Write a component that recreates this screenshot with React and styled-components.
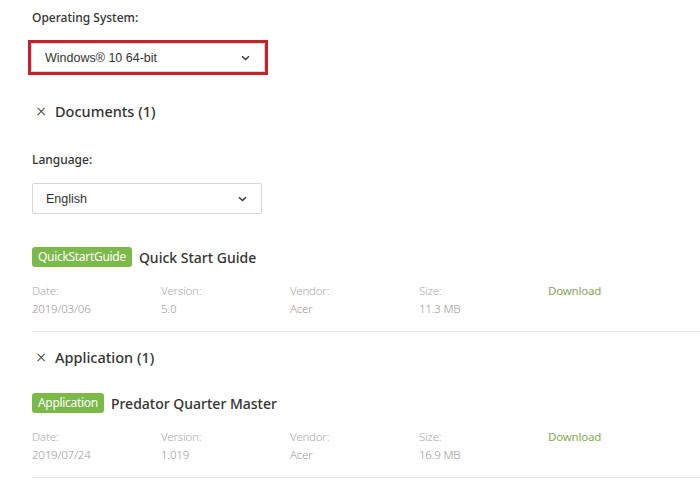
import React from "react";
import styled, { createGlobalStyle } from "styled-components";

const GlobalStyle = createGlobalStyle`
  body {
    margin: 0;
    background: #fff;
    font-family: "Noto Sans", "Open Sans", sans-serif;
    color: #333;
  }
`;

const secciones = [
  {
    nombre: "Documents",
    items: [
      {
        tipo: "QuickStartGuide",
        titulo: "Quick Start Guide",
        fecha: "2019/03/06",
        version: "5.0",
        vendor: "Acer",
        size: "11.3 MB",
      },
    ],
    idioma: true,
  },
  {
    nombre: "Application",
    items: [
      {
        tipo: "Application",
        titulo: "Predator Quarter Master",
        fecha: "2019/07/24",
        version: "1.019",
        vendor: "Acer",
        size: "16.9 MB",
      },
    ],
  },
];

const Chevron = () => (
  <svg width="9" height="6" viewBox="0 0 9 6">
    <path d="M1 1.2 L4.5 4.5 L8 1.2" fill="none" stroke="#333" strokeWidth="1.4" />
  </svg>
);

const Selector = ({ valor, ancho, alto }) => (
  <Select ancho={ancho} alto={alto}>
    <span>{valor}</span>
    <Chevron />
  </Select>
);

const Item = ({ datos }) => (
  <ContenedorItem>
    <FilaTitulo>
      <Etiqueta>{datos.tipo}</Etiqueta>
      <Titulo>{datos.titulo}</Titulo>
    </FilaTitulo>
    <Meta>
      <Dato>
        <Clave>Date:</Clave>
        <Valor>{datos.fecha}</Valor>
      </Dato>
      <Dato>
        <Clave>Version:</Clave>
        <Valor>{datos.version}</Valor>
      </Dato>
      <Dato>
        <Clave>Vendor:</Clave>
        <Valor>{datos.vendor}</Valor>
      </Dato>
      <Dato>
        <Clave>Size:</Clave>
        <Valor>{datos.size}</Valor>
      </Dato>
      <Dato>
        <Descarga>Download</Descarga>
      </Dato>
    </Meta>
  </ContenedorItem>
);

const App = () => {
  return (
    <>
      <GlobalStyle />
      <Pagina>
        <Label>Operating System:</Label>
        <Resaltado>
          <Selector valor="Windows® 10 64-bit" ancho="234px" alto="29px" />
        </Resaltado>
        {secciones.map((s, i) => (
          <Seccion key={s.nombre} primera={i === 0}>
            <Cabecera>
              <Cerrar>×</Cerrar>
              {s.nombre} ({s.items.length})
            </Cabecera>
            {s.idioma && (
              <Idioma>
                <Label>Language:</Label>
                <Separado>
                  <Selector valor="English" ancho="230px" alto="31px" />
                </Separado>
              </Idioma>
            )}
            {s.items.map((it) => (
              <Item key={it.titulo} datos={it} />
            ))}
          </Seccion>
        ))}
      </Pagina>
    </>
  );
};

const Pagina = styled.div`
  padding: 10px 0 0 32px;
`;

const Label = styled.div`
  font-size: 12px;
  line-height: 16px;
  font-weight: 500;
  color: #333;
`;

const Resaltado = styled.div`
  display: inline-flex;
  margin: 14px 0 0 -4px;
  border: 3px solid #c9212c;
`;

const Select = styled.div`
  box-sizing: border-box;
  width: ${(props) => props.ancho};
  height: ${(props) => props.alto};
  border: 1px solid #d6d6d6;
  border-radius: 2px;
  display: flex;
  align-items: center;
  justify-content: space-between;
  padding: 0 14px 0 13px;
  font-family: "Liberation Sans", Arial, sans-serif;
  font-size: 12.5px;
  color: #333;
  background: #fff;
`;

const Seccion = styled.div`
  margin-top: ${(props) => (props.primera ? "25px" : "14px")};
`;

const Cabecera = styled.div`
  display: flex;
  align-items: center;
  font-size: 14.5px;
  line-height: 22px;
  font-weight: 500;
  color: #333;
`;

const Cerrar = styled.span`
  font-size: 18px;
  font-weight: 300;
  width: 23px;
  padding-left: 4px;
  box-sizing: border-box;
`;

const Idioma = styled.div`
  margin-top: 30px;
`;

const Separado = styled.div`
  margin-top: 15px;
`;

const ContenedorItem = styled.div`
  margin-top: 33px;
  padding-bottom: 13px;
  border-bottom: 1px solid #e6e6e6;

  ${Cabecera} + & {
    margin-top: 25px;
  }
`;

const FilaTitulo = styled.div`
  display: flex;
  align-items: center;
  height: 20px;
`;

const Etiqueta = styled.span`
  background: #7cb94b;
  color: #fff;
  font-size: 12px;
  line-height: 20px;
  padding: 0 6px;
  border-radius: 3px;
  letter-spacing: -0.3px;
`;

const Titulo = styled.span`
  margin-left: 7px;
  font-size: 14px;
  font-weight: 500;
  color: #333;
`;

const Meta = styled.div`
  display: grid;
  grid-template-columns: repeat(5, 129px);
  margin-top: 15px;
`;

const Dato = styled.div`
  display: flex;
  flex-direction: column;
`;

const Clave = styled.span`
  font-size: 11.5px;
  line-height: 18px;
  font-weight: 300;
  color: #aaa;
  letter-spacing: -0.2px;
`;

const Valor = styled.span`
  font-size: 11.5px;
  line-height: 18px;
  font-weight: 300;
  color: #999;
  letter-spacing: -0.2px;
`;

const Descarga = styled.span`
  font-size: 11.5px;
  line-height: 18px;
  color: #86a85a;
  letter-spacing: -0.2px;
`;

export default App;
